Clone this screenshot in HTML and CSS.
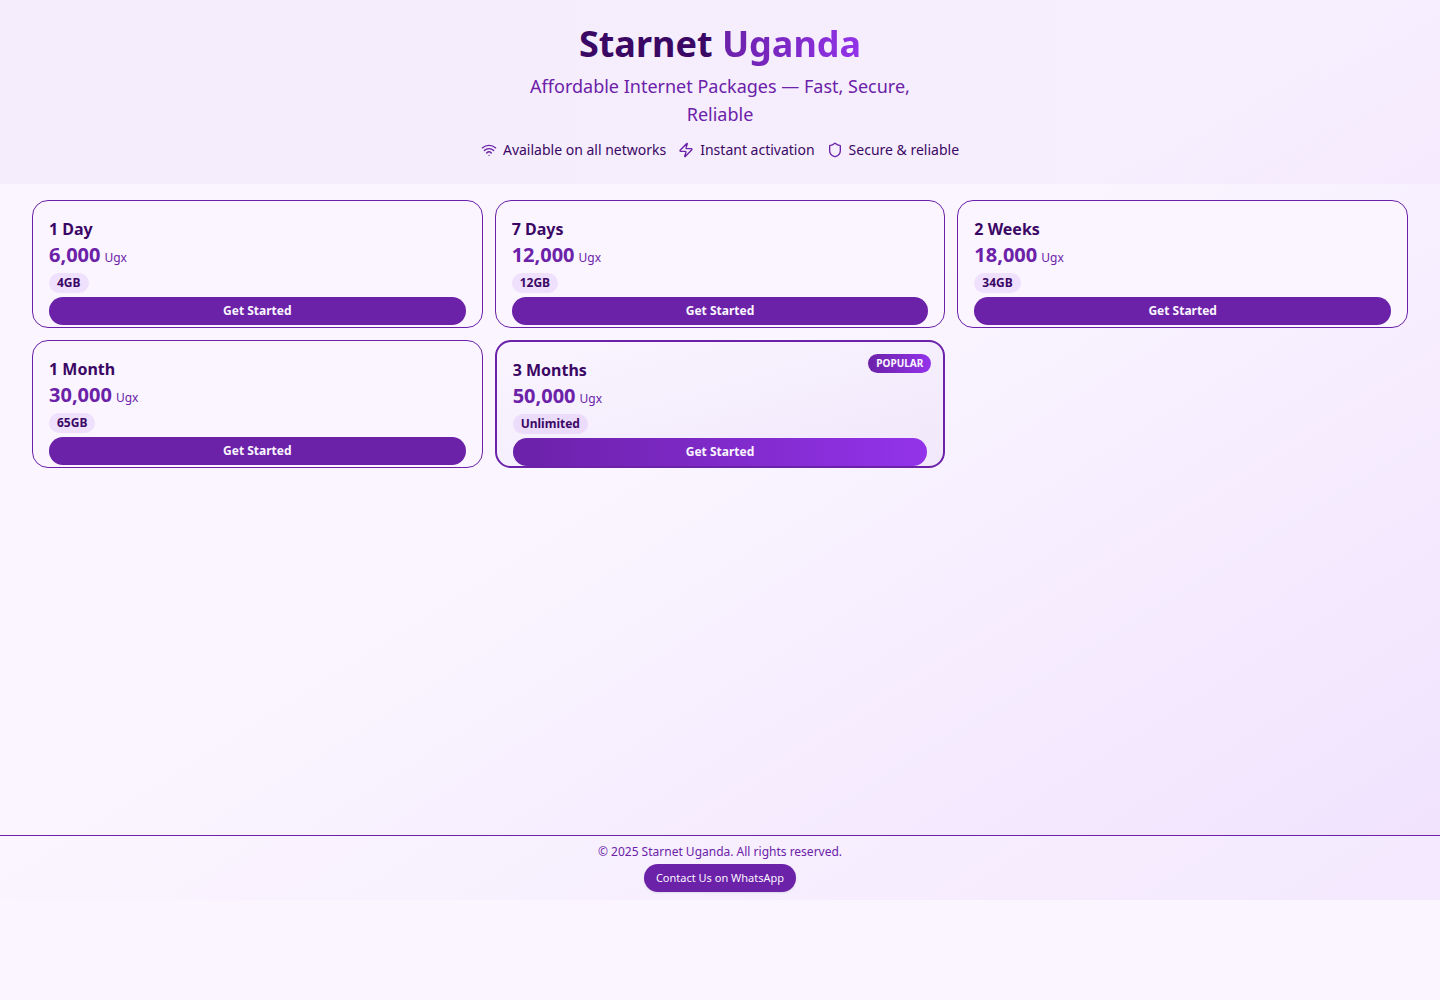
FILE: index.html
```html
<!DOCTYPE html>
<html lang="en">
<head>
    <meta charset="UTF-8">
    <meta name="viewport" content="width=device-width, initial-scale=1.0">
    <title>Starnet Uganda</title>
    <link rel="stylesheet" href="styles.css">
</head>
<body>
    <div class="page">
        <header class="header">
            <h1>Starnet <span class="brand-accent">Uganda</span></h1>
            <p class="tagline">Affordable Internet Packages — Fast, Secure, Reliable</p>
            <ul class="features">
                <li>
                    <svg class="icon" viewBox="0 0 24 24"><path d="M12 20h.01"/><path d="M2 8.82a15 15 0 0 1 20 0"/><path d="M5 12.86a10 10 0 0 1 14 0"/><path d="M8.5 16.43a5 5 0 0 1 7 0"/></svg>
                    Available on all networks
                </li>
                <li>
                    <svg class="icon" viewBox="0 0 24 24"><path d="M4 14a1 1 0 0 1-.78-1.63l9.9-10.2a.5.5 0 0 1 .86.46l-1.92 6.02A1 1 0 0 0 13 10h7a1 1 0 0 1 .78 1.63l-9.9 10.2a.5.5 0 0 1-.86-.46l1.92-6.02A1 1 0 0 0 11 14z"/></svg>
                    Instant activation
                </li>
                <li>
                    <svg class="icon" viewBox="0 0 24 24"><path d="M20 13c0 5-3.5 7.5-7.66 8.95a1 1 0 0 1-.67-.01C7.5 20.5 4 18 4 13V6a1 1 0 0 1 1-1c2 0 4.5-1.2 6.24-2.72a1.17 1.17 0 0 1 1.52 0C14.51 3.81 17 5 19 5a1 1 0 0 1 1 1z"/></svg>
                    Secure &amp; reliable
                </li>
            </ul>
        </header>

        <main class="packages">
            <article class="card">
                <h2>1 Day</h2>
                <p class="price">6,000 <span>Ugx</span></p>
                <span class="data">4GB</span>
                <button class="btn" type="button">Get Started</button>
            </article>
            <article class="card">
                <h2>7 Days</h2>
                <p class="price">12,000 <span>Ugx</span></p>
                <span class="data">12GB</span>
                <button class="btn" type="button">Get Started</button>
            </article>
            <article class="card">
                <h2>2 Weeks</h2>
                <p class="price">18,000 <span>Ugx</span></p>
                <span class="data">34GB</span>
                <button class="btn" type="button">Get Started</button>
            </article>
            <article class="card">
                <h2>1 Month</h2>
                <p class="price">30,000 <span>Ugx</span></p>
                <span class="data">65GB</span>
                <button class="btn" type="button">Get Started</button>
            </article>
            <article class="card popular">
                <span class="badge">POPULAR</span>
                <h2>3 Months</h2>
                <p class="price">50,000 <span>Ugx</span></p>
                <span class="data">Unlimited</span>
                <button class="btn" type="button">Get Started</button>
            </article>
        </main>

        <footer class="footer">
            <p>© 2025 Starnet Uganda. All rights reserved.</p>
            <a class="whatsapp" href="#">Contact Us on WhatsApp</a>
        </footer>
    </div>
</body>
</html>
```
FILE: styles.css
```css
:root {
    --bg: #faf5ff;
    --purple: #6b21a8;
    --purple-bright: #9333ea;
    --purple-dark: #3b0764;
    --gradient: linear-gradient(to right, var(--purple), var(--purple-bright));
}

* {
    box-sizing: border-box;
    margin: 0;
    padding: 0;
}

body {
    font-family: "Noto Sans", sans-serif;
    background: var(--bg);
    color: var(--purple-dark);
}

.page {
    display: flex;
    flex-direction: column;
    min-height: 90vh;
    background: linear-gradient(to bottom right, var(--bg) 48%, #f0e1fd);
}

/* Header */
.header {
    padding: 24px 16px;
    text-align: center;
    background: linear-gradient(to right, rgba(107, 33, 168, 0.04), rgba(147, 51, 234, 0.03));
}

h1 {
    font-size: 36px;
    line-height: 40px;
    font-weight: 700;
}

.brand-accent {
    background: var(--gradient);
    -webkit-background-clip: text;
    background-clip: text;
    color: transparent;
}

.tagline {
    max-width: 448px;
    margin: 8px auto 12px;
    font-size: 18px;
    line-height: 28px;
    color: var(--purple);
}

.features {
    display: flex;
    flex-wrap: wrap;
    justify-content: center;
    gap: 12px;
    list-style: none;
    font-size: 14px;
    line-height: 20px;
}

.features li {
    display: flex;
    align-items: center;
    gap: 6px;
}

.icon {
    width: 16px;
    height: 16px;
    fill: none;
    stroke: var(--purple);
    stroke-width: 2;
    stroke-linecap: round;
    stroke-linejoin: round;
}

/* Packages */
.packages {
    flex: 1;
    display: grid;
    grid-template-columns: repeat(3, 1fr);
    align-content: start;
    gap: 12px;
    padding: 16px 32px;
}

.card {
    position: relative;
    display: flex;
    flex-direction: column;
    align-items: flex-start;
    padding: 16px 16px 2px;
    background: var(--bg);
    border: 1px solid var(--purple);
    border-radius: 16px;
}

.card h2 {
    font-size: 16px;
    line-height: 24px;
    font-weight: 700;
}

.price {
    display: flex;
    align-items: baseline;
    gap: 4px;
    font-size: 20px;
    line-height: 28px;
    font-weight: 700;
    color: var(--purple);
}

.price span {
    font-size: 12px;
    line-height: 16px;
    font-weight: 400;
}

.data {
    margin: 4px 0;
    padding: 2px 8px;
    font-size: 12px;
    line-height: 16px;
    font-weight: 700;
    background: rgba(147, 51, 234, 0.1);
    border-radius: 10px;
}

.btn {
    width: 100%;
    padding: 6px 12px;
    font: 700 12px/16px "Noto Sans", sans-serif;
    color: var(--bg);
    background: var(--purple);
    border: none;
    border-radius: 14px;
    cursor: pointer;
}

.popular {
    padding-bottom: 0;
    border-width: 2px;
    background: linear-gradient(to bottom right, var(--bg), #f1e8fb);
}

.popular .btn {
    background: var(--gradient);
}

.badge {
    position: absolute;
    top: 12px;
    right: 12px;
    padding: 2px 8px;
    font-size: 10px;
    line-height: 15px;
    font-weight: 700;
    color: var(--bg);
    background: var(--gradient);
    border-radius: 10px;
}

/* Footer */
.footer {
    display: flex;
    flex-direction: column;
    align-items: center;
    gap: 4px;
    padding: 8px;
    font-size: 12px;
    line-height: 16px;
    color: var(--purple);
    background: rgba(250, 245, 255, 0.4);
    border-top: 1px solid var(--purple);
}

.whatsapp {
    padding: 6px 12px;
    font-size: 11px;
    color: var(--bg);
    background: var(--purple);
    border-radius: 14px;
    box-shadow: 0 1px 2px rgba(0, 0, 0, 0.1);
    text-decoration: none;
}

@media (max-width: 900px) {
    .packages {
        grid-template-columns: repeat(2, 1fr);
        padding: 16px;
    }
}

@media (max-width: 560px) {
    .packages {
        grid-template-columns: 1fr;
    }
}
```
